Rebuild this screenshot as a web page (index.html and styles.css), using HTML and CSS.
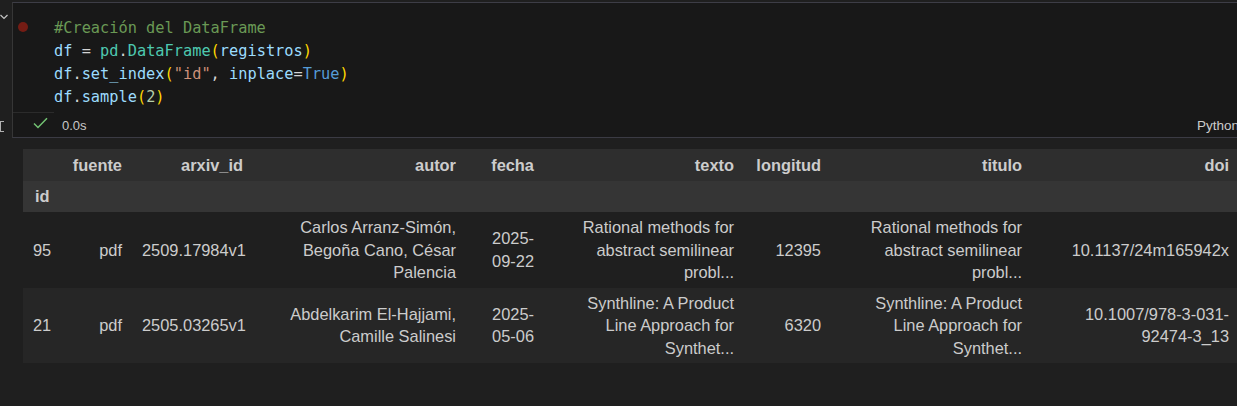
FILE: index.html
```html
<!DOCTYPE html>
<html lang="es">
<head>
<meta charset="utf-8">
<title>Notebook cell</title>
<link rel="stylesheet" href="styles.css">
</head>
<body>
<div class="cell-row">
  <div class="outer-gutter">
    <svg class="chevron" width="8" height="6" viewBox="0 0 8 6"><polyline points="0.5,1 4,4.5 7.5,1" fill="none" stroke="#c5c5c5" stroke-width="1.2"/></svg>
    <svg class="bracket" width="4" height="11" viewBox="0 0 4 11"><rect x="0.5" y="0.5" width="6" height="10" fill="none" stroke="#b0b0b0" stroke-width="1"/></svg>
  </div>
  <div class="cell">
    <div class="cell-gutter"><span class="breakpoint"></span></div>
    <pre class="code"><span class="c-com">#Creación del DataFrame</span>
<span class="c-var">df</span> <span class="c-op">=</span> <span class="c-cls">pd</span><span class="c-op">.</span><span class="c-cls">DataFrame</span><span class="c-br">(</span><span class="c-var">registros</span><span class="c-br">)</span>
<span class="c-var">df</span><span class="c-op">.</span><span class="c-var">set_index</span><span class="c-br">(</span><span class="c-str">"id"</span><span class="c-op">, </span><span class="c-var">inplace</span><span class="c-op">=</span><span class="c-kw">True</span><span class="c-br">)</span>
<span class="c-var">df</span><span class="c-op">.</span><span class="c-var">sample</span><span class="c-br">(</span><span class="c-num">2</span><span class="c-br">)</span></pre>
    <div class="status-gutter">
      <svg class="check" width="15" height="12" viewBox="0 0 15 12"><polyline points="1,6.5 5,10.5 14,1.2" fill="none" stroke="#73c373" stroke-width="1.5"/></svg>
    </div>
    <div class="status">
      <span class="time">0.0s</span>
      <span class="kernel">Python</span>
    </div>
  </div>
</div>

<div class="output">
  <table class="df">
    <colgroup>
      <col class="w-id"><col class="w-fuente"><col class="w-arxiv"><col class="w-autor"><col class="w-fecha"><col class="w-texto"><col class="w-long"><col class="w-titulo"><col class="w-doi">
    </colgroup>
    <thead>
      <tr class="h1">
        <th></th><th>fuente</th><th>arxiv_id</th><th>autor</th><th>fecha</th><th>texto</th><th>longitud</th><th>titulo</th><th>doi</th>
      </tr>
      <tr class="h2">
        <th class="idx">id</th><th></th><th></th><th></th><th></th><th></th><th></th><th></th><th></th>
      </tr>
    </thead>
    <tbody>
      <tr class="r1">
        <th class="idx">95</th>
        <td>pdf</td>
        <td>2509.17984v1</td>
        <td>Carlos Arranz-Simón,<br>Begoña Cano, César<br>Palencia</td>
        <td>2025-<br>09-22</td>
        <td>Rational methods for<br>abstract semilinear<br>probl...</td>
        <td>12395</td>
        <td>Rational methods for<br>abstract semilinear<br>probl...</td>
        <td>10.1137/24m165942x</td>
      </tr>
      <tr class="r2">
        <th class="idx">21</th>
        <td>pdf</td>
        <td>2505.03265v1</td>
        <td>Abdelkarim El-Hajjami,<br>Camille Salinesi</td>
        <td>2025-<br>05-06</td>
        <td>Synthline: A Product<br>Line Approach for<br>Synthet...</td>
        <td>6320</td>
        <td>Synthline: A Product<br>Line Approach for<br>Synthet...</td>
        <td>10.1007/978-3-031-<br>92474-3_13</td>
      </tr>
    </tbody>
  </table>
</div>
</body>
</html>
```

FILE: styles.css
```css
html, body {
  margin: 0;
  padding: 0;
}
body {
  background: #1f1f1f;
  width: 1237px;
  height: 406px;
  overflow: hidden;
  font-family: "Liberation Sans", Arial, sans-serif;
  color: #cccccc;
}

.cell-row {
  display: flex;
  padding-top: 2px;
}

.outer-gutter {
  width: 12px;
  flex: 0 0 12px;
  position: relative;
}
.chevron {
  position: absolute;
  left: 0;
  top: 12px;
}
.bracket {
  position: absolute;
  left: 0;
  top: 119px;
}

.cell {
  flex: 1;
  margin-right: -12px;
  display: grid;
  grid-template-columns: 41px 1fr;
  grid-template-rows: 109px 25px;
  background: #181818;
  border-top: 1px solid #3d3d46;
  border-left: 1px solid #363636;
  border-bottom: 1px solid #3b3b44;
}

.cell-gutter {
  position: relative;
}
.breakpoint {
  display: block;
  width: 10px;
  height: 10px;
  border-radius: 50%;
  background: #741c14;
  margin: 19px 0 0 5px;
}

.code {
  margin: 0;
  padding: 13.5px 0 0 0;
  font-family: "DejaVu Sans Mono", "Liberation Mono", monospace;
  font-size: 15.3px;
  line-height: 23px;
  color: #d4d4d4;
}
.c-com { color: #6a9955; }
.c-var { color: #9cdcfe; }
.c-op  { color: #d4d4d4; }
.c-cls { color: #4ec9b0; }
.c-br  { color: #ffd700; }
.c-str { color: #ce9178; }
.c-kw  { color: #569cd6; }
.c-num { color: #b5cea8; }

.status-gutter {
  border-top: 1px solid #2b2b2b;
  position: relative;
}
.check {
  display: block;
  margin: 4px 0 0 20px;
}

.status {
  display: flex;
  align-items: center;
  padding: 2px 10px 0 8px;
  font-size: 13px;
  color: #cccccc;
}
.time {
  color: #c8c8c8;
}
.kernel {
  margin-left: auto;
  font-size: 13.5px;
}

.output {
  padding: 11px 0 0 23px;
}

.df {
  border-collapse: collapse;
  table-layout: fixed;
  width: 1216px;
  font-size: 16.4px;
  line-height: 22.5px;
  color: #cccccc;
}
.w-id { width: 39px; }
.w-fuente { width: 70px; }
.w-arxiv { width: 121px; }
.w-autor { width: 213px; }
.w-fecha { width: 78px; }
.w-texto { width: 200px; }
.w-long { width: 87px; }
.w-titulo { width: 201px; }
.w-doi { width: 207px; }

.df th, .df td {
  padding: 4px 10px;
  text-align: right;
  vertical-align: middle;
  white-space: nowrap;
}
.df thead th {
  font-weight: bold;
  padding-top: 4.5px;
  padding-bottom: 4.5px;
}
.df td {
  font-weight: normal;
}
.df .idx {
  text-align: left;
  font-weight: normal;
}
.df thead .idx {
  font-weight: bold;
  padding-left: 12px;
}

.h1 { background: #2e2e2e; }
.h2 { background: #353535; }
.r1 { background: #1f1f1f; }
.r2 { background: #262626; }
```
